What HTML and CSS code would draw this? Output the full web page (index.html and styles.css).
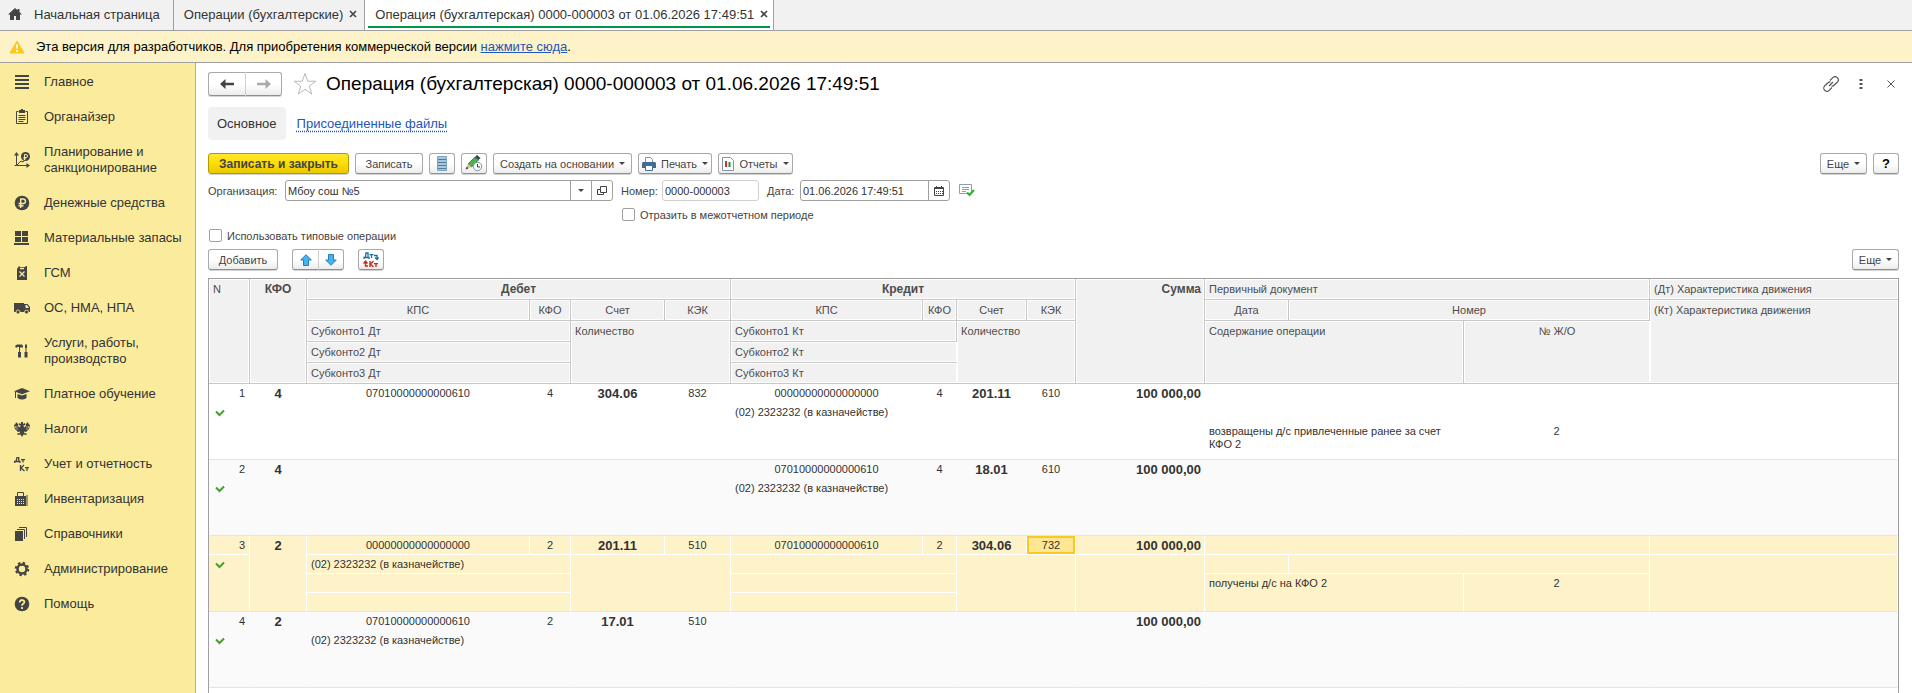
FILE: index.html
```html
<!DOCTYPE html>
<html lang="ru">
<head>
<meta charset="utf-8">
<meta name="viewport" content="width=device-width, initial-scale=1">
<title>Операция (бухгалтерская) 0000-000003 от 01.06.2026 17:49:51</title>
<link rel="stylesheet" href="styles.css">
</head>
<body>

  <nav class="tabs">
    <a class="tab home" href="#">
      <svg width="16" height="14" viewBox="0 0 16 14"><path fill="#444" d="M8 1 1 7.500h2V13h4V9h2v4h4V7.500h2L12.500 5V2h-2v1.200z"/></svg>
      Начальная страница
    </a>
    <div class="tab">
      <a href="#">Операции (бухгалтерские)</a>
      <button class="tab-close" aria-label="Закрыть"><svg width="8" height="8" viewBox="0 0 8 8"><path d="M1 1l6 6M7 1 1 7" stroke="#444" stroke-width="1.600"/></svg></button>
    </div>
    <div class="tab active">
      <a href="#">Операция (бухгалтерская) 0000-000003 от 01.06.2026 17:49:51</a>
      <button class="tab-close" aria-label="Закрыть"><svg width="8" height="8" viewBox="0 0 8 8"><path d="M1 1l6 6M7 1 1 7" stroke="#444" stroke-width="1.600"/></svg></button>
    </div>
  </nav>

  <div class="notice">
    <svg width="16" height="14" viewBox="0 0 16 14"><path fill="#fbc81c" stroke="#fbc81c" stroke-linejoin="round" d="M8 1 1 13h14z"/><path stroke="#fff" stroke-width="2" d="M8 4.500v4M8 10v2"/></svg>
    <span>Эта версия для разработчиков. Для приобретения коммерческой версии <a href="#">нажмите сюда</a>.</span>
  </div>

  <div class="page">
    <nav class="sidebar">
      <a href="#"><svg width="16" height="16" viewBox="0 0 16 16"><path fill="#444" d="M1 1h14v2H1zM1 5h14v2H1zM1 9h14v2H1zM1 13h14v2H1z"/></svg>Главное</a>
      <a href="#"><svg width="16" height="16" viewBox="0 0 16 16"><path fill="none" stroke="#444" d="M4.500 2.500h-2v12h11v-12h-2"/><path fill="#444" d="M5 1h2V0h2v1h2v3H5z"/><path stroke="#444" d="M4.500 6.500h7M4.500 8.500h7M4.500 10.500h7M4.500 12.500h5"/></svg>Органайзер</a>
      <a href="#"><svg width="16" height="16" viewBox="0 0 16 16"><path fill="none" stroke="#444" d="M2.500 2v11.500H14M3 13l4-4 2 1 2-2"/><path fill="#444" d="M2.500 0 5 3.500H0zM16 13.500 12.500 11v5zM.500 13h2v1h-2z"/><circle cx="11.500" cy="4.500" r="4.500" fill="#444"/><path fill="none" stroke="#faeb9d" d="M10.500 8V2.500h1.500a1 1 0 0 1 0 3H9.500M9.500 6.800H12"/></svg>Планирование и санкционирование</a>
      <a href="#"><svg width="16" height="16" viewBox="0 0 16 16"><circle cx="8" cy="8" r="7.300" fill="#444"/><path fill="none" stroke="#faeb9d" stroke-width="1.400" d="M6.700 13V4h2.500a2.200 2.200 0 0 1 0 4.500H4.500M4.500 10.700h5"/></svg>Денежные средства</a>
      <a href="#"><svg width="16" height="16" viewBox="0 0 16 16"><path fill="#444" d="M1 1h6v5H1zM8 1h6v5H8zM1 7h6v5H1zM8 7h6v5H8zM0 13h15v2H0z"/></svg>Материальные запасы</a>
      <a href="#"><svg width="16" height="16" viewBox="0 0 16 16"><path fill="#444" d="M3 4l2-3 1 1h5l1-1h1v14H3z"/><path stroke="#faeb9d" stroke-width="1.300" d="M5.500 6.500l5 5M10.500 6.500l-5 5M6 3.500h4"/></svg>ГСМ</a>
      <a href="#"><svg width="16" height="16" viewBox="0 0 16 16"><path fill="#444" d="M0 3h10v9H0zM9 4h4.500L16 7v5H9z"/><path fill="#faeb9d" d="M11.500 5H13l2 3h-3.500z"/><circle cx="4" cy="12" r="2" fill="#444" stroke="#faeb9d" stroke-width=".800"/><circle cx="12.500" cy="12" r="2" fill="#444" stroke="#faeb9d" stroke-width=".800"/></svg>ОС, НМА, НПА</a>
      <a href="#"><svg width="16" height="16" viewBox="0 0 16 16"><path fill="#444" d="M1 3l2-1.500h5L9 3v1.500H6V9h1v5.500H4V9h1V4H3.500L2 5zM11 2l1-1 1 1v3h-.500v4h1v5.500h-3V9h1V5H11z"/></svg>Услуги, работы, производство</a>
      <a href="#"><svg width="16" height="16" viewBox="0 0 16 16"><path fill="#444" d="M8 2l8 3.200-8 3-8-3z"/><path fill="#444" d="M3.500 8 8 9.500 12.500 8v4q-4.500 3-9 0zM1 6h1v6H1z"/></svg>Платное обучение</a>
      <a href="#"><svg width="16" height="16" viewBox="0 0 16 16"><path fill="#444" d="M7 1h2v2l2-1 .500 2-2 .500.500 2L12 5V3l2-2 .500 2L16 4l-1 4-3 3-2-.500.500 2 2-.500v2l-3-.500L8 16l-1.500-2.500-3 .500v-2l2 .500.500-2L4 11 1 8 0 4l1.500-1L2 1l2 2v2l2 1.500.500-2-2-.500L5 2l2 1z"/><path stroke="#faeb9d" stroke-width=".600" d="M3 5v4M13 5v4M1.500 5v2M14.500 5v2"/></svg>Налоги</a>
      <a href="#"><svg width="16" height="16" viewBox="0 0 16 16"><g fill="none" stroke="#444" stroke-width="1.300"><path d="M.600 7V5.500h5.300V7M2 5.500 3 1.600h1.700v4M7 3.600h4M9 3.600v3M6.500 9v6M10 9l-3 3 3.500 3M11 11.600h4M13 11.600V15"/></g></svg>Учет и отчетность</a>
      <a href="#"><svg width="16" height="16" viewBox="0 0 16 16"><path fill="none" stroke="#444" d="M3.500 6V1.500h6V6"/><path fill="#444" d="M1 5h11v10H1zM12.500 4h1v11h-1z"/><path stroke="#faeb9d" stroke-dasharray="1 1" d="M3 8.500h8M3 10.500h8M3 12.500h8"/></svg>Инвентаризация</a>
      <a href="#"><svg width="16" height="16" viewBox="0 0 16 16"><path fill="#444" d="M1 5h8v10H1z"/><path fill="none" stroke="#444" d="M3 3.500h7.500V13M5 1.500h7.500V11"/></svg>Справочники</a>
      <a href="#"><svg width="16" height="16" viewBox="0 0 16 16"><circle cx="8" cy="8" r="4.500" fill="none" stroke="#444" stroke-width="2.500"/><circle cx="8" cy="8" r="6.200" fill="none" stroke="#444" stroke-width="2" stroke-dasharray="2.430 2.430"/></svg>Администрирование</a>
      <a href="#"><svg width="16" height="16" viewBox="0 0 16 16"><circle cx="8" cy="8" r="7.300" fill="#444"/><path fill="none" stroke="#faeb9d" stroke-width="1.800" d="M5.700 6.500c0-3.500 5-3 4.600-.300C10 7.700 8 7.700 8 9.800M8 11v2"/></svg>Помощь</a>
    </nav>

    <main class="content">
      <header class="title-row">
        <div class="btn-group nav-btns">
          <button class="btn" aria-label="Назад"><svg width="14" height="10" viewBox="0 0 14 10"><path fill="#444" d="M0 5l5.500-5v3.800H14v2.400H5.500V10z"/></svg></button>
          <button class="btn" aria-label="Вперед"><svg width="14" height="10" viewBox="0 0 14 10"><path fill="#aaa" d="M14 5 8.500 0v3.800H0v2.400h8.500V10z"/></svg></button>
        </div>
        <svg class="star" width="24" height="24" viewBox="0 0 24 24"><path fill="#fff" stroke="#b4bac0" d="M12 1.500l2.700 7.700h8.100l-6.500 4.900 2.400 7.900L12 17.200 5.300 22l2.400-7.900L1.200 9.200h8.100z"/></svg>
        <h1>Операция (бухгалтерская) 0000-000003 от 01.06.2026 17:49:51</h1>
        <div class="window-icons">
          <button aria-label="Ссылка"><svg width="16" height="16" viewBox="0 0 16 16"><g fill="none" stroke="#555" stroke-width="1.200"><path d="M7 4.500 9.800 1.700a3 3 0 0 1 4.500 4.500L11 9.300a2.800 2.800 0 0 1-2.500.700M9 11.500 6.200 14.300a3 3 0 0 1-4.500-4.500L5 6.700A2.800 2.800 0 0 1 7.500 6M6 10l4-4"/></g></svg></button>
          <button aria-label="Меню"><svg width="4" height="12" viewBox="0 0 4 12"><path fill="#555" d="M.500 1h3v2h-3zM.500 5h3v2h-3zM.500 9h3v2h-3z"/></svg></button>
          <button aria-label="Закрыть"><svg width="8" height="8" viewBox="0 0 8 8"><path d="M.500.500l7 7M7.500.500l-7 7" stroke="#555"/></svg></button>
        </div>
      </header>

      <nav class="sections">
        <a class="current" href="#">Основное</a>
        <a href="#">Присоединенные файлы</a>
      </nav>

      <div class="toolbar">
        <button class="btn primary">Записать и закрыть</button>
        <button class="btn save">Записать</button>
        <button class="btn icon" aria-label="Журнал"><svg width="12" height="15" viewBox="0 0 12 15"><path fill="#a9c8e0" stroke="#7ba3c0" d="M1.500.500h9v14h-9z"/><path stroke="#4f7d9f" d="M2 3.500h8M2 6.500h8M2 9.500h8M2 12.500h8"/></svg></button>
        <button class="btn icon" aria-label="Редактировать"><svg width="18" height="17" viewBox="0 0 18 17"><path fill="#4caf50" stroke="#2c7a37" stroke-width=".800" d="M3 9 10 2l3.500 3-7 7z"/><path fill="#37474f" d="M10 2l2-2 3.500 3-2 2z"/><path fill="#e7bd86" d="M3 9l3.500 3L1 14z"/><path fill="#444" d="M1.800 11.500.500 14.500l3-1z"/><circle cx="12.500" cy="11.500" r="4.200" fill="#fff" stroke="#7895a8"/><path fill="none" stroke="#37474f" d="M12.500 9v3H15"/></svg></button>
        <button class="btn create">Создать на основании <i class="caret"></i></button>
        <button class="btn print"><svg width="14" height="14" viewBox="0 0 14 14"><path fill="#fff" stroke="#7a94a8" d="M3.500 5.500v-5h5l2 2v3"/><path fill="#3f6c94" d="M1 5h12l1 1v5H0V6z"/><path fill="#fff" stroke="#3f6c94" d="M3.500 8.500h7v5h-7z"/></svg>Печать <i class="caret"></i></button>
        <button class="btn reports"><svg width="12" height="14" viewBox="0 0 12 14"><path fill="#fff" stroke="#8096a8" d="M.500.500h8l3 3v10H.500z"/><path fill="#e22" d="M3 4h2v6H3z"/><path fill="#0a9b3a" d="M6.500 5h2v5h-2z"/></svg>Отчеты <i class="caret"></i></button>
        <span class="spacer"></span>
        <button class="btn more">Еще <i class="caret"></i></button>
        <button class="btn icon help">?</button>
      </div>

      <div class="form">
        <label class="org-label" for="org">Организация:</label>
        <div class="field org">
          <select id="org"><option>Мбоу сош №5</option></select>
          <span class="drop"><i class="caret"></i></span>
          <button aria-label="Открыть"><svg width="10" height="10" viewBox="0 0 10 10"><path fill="none" stroke="#444" d="M3.500.500h6v6h-6zM3 3.500H.500v5h6V7"/></svg></button>
        </div>
        <div class="number-date">
          <label for="num">Номер:</label>
          <input class="field number" id="num" type="text" value="0000-000003">
          <label class="date-label" for="date">Дата:</label>
          <div class="field date">
            <input id="date" type="text" value="01.06.2026 17:49:51">
            <button aria-label="Календарь"><svg width="10" height="10" viewBox="0 0 10 10"><path fill="none" stroke="#444" d="M.500 1.500h9v8h-9z"/><path fill="#444" d="M1 1h8v2H1zM2 0h1v1H2zM7 0h1v1H7z"/><path stroke="#444" stroke-dasharray="1 1" d="M2 5.500h7M2 7.500h7"/></svg></button>
          </div>
          <svg class="posted" width="16" height="13" viewBox="0 0 16 13"><path fill="#fff" stroke="#8ba0b2" d="M.500.500h12v9H.500z"/><path stroke="#8ba0b2" d="M3 3.500h7M3 5.500h7M3 7.500h4"/><path fill="none" stroke="#2fb43a" stroke-width="2.200" d="M8 8.500l2.500 2.500L15 6"/></svg>
        </div>
        <label class="check between"><input type="checkbox">Отразить в межотчетном периоде</label>
      </div>

      <label class="check typical"><input type="checkbox">Использовать типовые операции</label>

      <div class="toolbar table-bar">
        <button class="btn add">Добавить</button>
        <div class="btn-group arrows">
          <button class="btn" aria-label="Вверх"><svg width="12" height="12" viewBox="0 0 12 12"><path fill="#47b2ee" stroke="#2681b5" d="M6 .700 11.300 6H8.500v5.500h-5V6H.700z"/></svg></button>
          <button class="btn" aria-label="Вниз"><svg width="12" height="12" viewBox="0 0 12 12"><path fill="#47b2ee" stroke="#2681b5" d="M6 11.300 11.300 6H8.500V.500h-5V6H.700z"/></svg></button>
        </div>
        <button class="btn icon" aria-label="Поменять Дт и Кт"><svg width="16" height="16" viewBox="0 0 16 16"><g fill="none" stroke="#1b6f9c" stroke-width="1.300"><path d="M1 7V5.500h5V7M2.300 5.500 3 1h2v4.500M6.500 2.600h4M8.500 2.600V6M11 3.500h3V7M12 5.500l2 2 1.500-2"/></g><g fill="none" stroke="#c62b1c" stroke-width="1.400"><path d="M2.500 9.500V14H5M.500 11.500l2-2.500 2 2.500M7 9v6M10.500 9l-3 3 3 3M11 11.600h4M13 11.600V15"/></g></svg></button>
        <span class="spacer"></span>
        <button class="btn more">Еще <i class="caret"></i></button>
      </div>

      <div class="grid-wrap">
        <table class="grid">
          <colgroup>
            <col class="c-n"><col class="c-kfo">
            <col class="d-kps"><col class="d-kfo"><col class="d-acc"><col class="d-kek">
            <col class="k-kps"><col class="k-kfo"><col class="k-acc"><col class="k-kek">
            <col class="c-sum"><col class="c-date"><col class="c-num"><col class="c-jo"><col>
          </colgroup>
          <thead>
            <tr>
              <th rowspan="5" class="left">N</th>
              <th rowspan="5" class="bold">КФО</th>
              <th colspan="4" class="bold">Дебет</th>
              <th colspan="4" class="bold">Кредит</th>
              <th rowspan="5" class="bold right">Сумма</th>
              <th colspan="3" class="left">Первичный документ</th>
              <th class="left">(Дт) Характеристика движения</th>
            </tr>
            <tr>
              <th>КПС</th><th>КФО</th><th>Счет</th><th>КЭК</th>
              <th>КПС</th><th>КФО</th><th>Счет</th><th>КЭК</th>
              <th>Дата</th><th colspan="2">Номер</th>
              <th rowspan="4" class="left">(Кт) Характеристика движения</th>
            </tr>
            <tr>
              <th colspan="2" class="left">Субконто1 Дт</th>
              <th colspan="2" rowspan="3" class="left">Количество</th>
              <th colspan="2" class="left">Субконто1 Кт</th>
              <th colspan="2" rowspan="3" class="left">Количество</th>
              <th colspan="2" rowspan="3" class="left">Содержание операции</th>
              <th rowspan="3">№ Ж/О</th>
            </tr>
            <tr>
              <th colspan="2" class="left">Субконто2 Дт</th>
              <th colspan="2" class="left">Субконто2 Кт</th>
            </tr>
            <tr>
              <th colspan="2" class="left">Субконто3 Дт</th>
              <th colspan="2" class="left">Субконто3 Кт</th>
            </tr>
          </thead>

          <tbody>
            <tr>
              <td class="right n">1</td><td rowspan="4" class="bold">4</td>
              <td>07010000000000610</td><td>4</td><td class="bold">304.06</td><td>832</td>
              <td>00000000000000000</td><td>4</td><td class="bold">201.11</td><td>610</td>
              <td class="bold right">100 000,00</td><td colspan="3"></td><td></td>
            </tr>
            <tr>
              <td rowspan="3" class="left mark"><svg width="10" height="8" viewBox="0 0 10 8"><path fill="none" stroke="#46a02a" stroke-width="2" d="M1 2.500 4.500 6 9 1.500"/></svg></td>
              <td colspan="2"></td><td colspan="2" rowspan="3"></td>
              <td colspan="2" class="left">(02) 2323232 (в казначействе)</td><td colspan="2" rowspan="3"></td>
              <td rowspan="3"></td><td></td><td colspan="2"></td><td rowspan="3"></td>
            </tr>
            <tr>
              <td colspan="2"></td><td colspan="2"></td>
              <td colspan="2" rowspan="2" class="left note">возвращены д/с привлеченные ранее за счет КФО 2</td><td rowspan="2">2</td>
            </tr>
            <tr><td colspan="2"></td><td colspan="2"></td></tr>
          </tbody>

          <tbody class="even">
            <tr>
              <td class="right n">2</td><td rowspan="4" class="bold">4</td>
              <td></td><td></td><td></td><td></td>
              <td>07010000000000610</td><td>4</td><td class="bold">18.01</td><td>610</td>
              <td class="bold right">100 000,00</td><td colspan="3"></td><td></td>
            </tr>
            <tr>
              <td rowspan="3" class="left mark"><svg width="10" height="8" viewBox="0 0 10 8"><path fill="none" stroke="#46a02a" stroke-width="2" d="M1 2.500 4.500 6 9 1.500"/></svg></td>
              <td colspan="2"></td><td colspan="2" rowspan="3"></td>
              <td colspan="2" class="left">(02) 2323232 (в казначействе)</td><td colspan="2" rowspan="3"></td>
              <td rowspan="3"></td><td></td><td colspan="2"></td><td rowspan="3"></td>
            </tr>
            <tr>
              <td colspan="2"></td><td colspan="2"></td>
              <td colspan="2" rowspan="2"></td><td rowspan="2"></td>
            </tr>
            <tr><td colspan="2"></td><td colspan="2"></td></tr>
          </tbody>

          <tbody class="selected">
            <tr>
              <td class="right n">3</td><td rowspan="4" class="bold">2</td>
              <td>00000000000000000</td><td>2</td><td class="bold">201.11</td><td>510</td>
              <td>07010000000000610</td><td>2</td><td class="bold">304.06</td><td class="cursor">732</td>
              <td class="bold right">100 000,00</td><td colspan="3"></td><td></td>
            </tr>
            <tr>
              <td rowspan="3" class="left mark"><svg width="10" height="8" viewBox="0 0 10 8"><path fill="none" stroke="#46a02a" stroke-width="2" d="M1 2.500 4.500 6 9 1.500"/></svg></td>
              <td colspan="2" class="left">(02) 2323232 (в казначействе)</td><td colspan="2" rowspan="3"></td>
              <td colspan="2"></td><td colspan="2" rowspan="3"></td>
              <td rowspan="3"></td><td></td><td colspan="2"></td><td rowspan="3"></td>
            </tr>
            <tr>
              <td colspan="2"></td><td colspan="2"></td>
              <td colspan="2" rowspan="2" class="left note">получены д/с на КФО 2</td><td rowspan="2">2</td>
            </tr>
            <tr><td colspan="2"></td><td colspan="2"></td></tr>
          </tbody>

          <tbody class="even">
            <tr>
              <td class="right n">4</td><td rowspan="4" class="bold">2</td>
              <td>07010000000000610</td><td>2</td><td class="bold">17.01</td><td>510</td>
              <td></td><td></td><td></td><td></td>
              <td class="bold right">100 000,00</td><td colspan="3"></td><td></td>
            </tr>
            <tr>
              <td rowspan="3" class="left mark"><svg width="10" height="8" viewBox="0 0 10 8"><path fill="none" stroke="#46a02a" stroke-width="2" d="M1 2.500 4.500 6 9 1.500"/></svg></td>
              <td colspan="2" class="left">(02) 2323232 (в казначействе)</td><td colspan="2" rowspan="3"></td>
              <td colspan="2"></td><td colspan="2" rowspan="3"></td>
              <td rowspan="3"></td><td></td><td colspan="2"></td><td rowspan="3"></td>
            </tr>
            <tr>
              <td colspan="2"></td><td colspan="2"></td>
              <td colspan="2" rowspan="2"></td><td rowspan="2"></td>
            </tr>
            <tr><td colspan="2"></td><td colspan="2"></td></tr>
          </tbody>
        </table>
      </div>
    </main>
  </div>

</body>
</html>
```
FILE: styles.css
```css
* {
  box-sizing: border-box;
}

body {
  margin: 0;
  height: 100vh;
  overflow: hidden;
  display: flex;
  flex-direction: column;
  font-family: "Liberation Sans", Arial, sans-serif;
  font-size: 11px;
  color: #444;
  background: #fff;
}

button, input, select {
  font: inherit;
  color: inherit;
}

svg {
  display: block;
  flex: none;
}

/* Open windows */
.tabs {
  display: flex;
  flex: none;
  height: 31px;
  background: #f1f1f1;
  border-bottom: 1px solid #a0a0a0;
  font-size: 13px;
}

.tab {
  display: flex;
  align-items: center;
  gap: 6px;
  padding: 0 7px 2px 10px;
  border-right: 1px solid #a0a0a0;
  white-space: nowrap;
}

.tab.home {
  gap: 11px;
  padding: 0 13px 2px 7px;
}

.tab, .tab a {
  color: #333;
  text-decoration: none;
}

.tab.active {
  position: relative;
  padding-right: 5px;
  background: #fff;
}

.tab.active::after {
  content: "";
  position: absolute;
  left: 3px;
  right: 3px;
  bottom: 2px;
  height: 2px;
  background: #00964a;
}

.tab-close {
  padding: 0;
  border: 0;
  background: none;
}

.notice {
  display: flex;
  flex: none;
  align-items: center;
  gap: 11px;
  height: 32px;
  padding-left: 9px;
  background: #fdf2c8;
  border-bottom: 1px solid #a0a0a0;
  color: #000;
  font-size: 13px;
}

a {
  color: #2455b8;
}

.page {
  display: flex;
  flex: 1;
  min-height: 0;
}

/* Main menu */
.sidebar {
  flex: none;
  width: 196px;
  padding-top: 1px;
  background: #faeb9d;
  border-right: 1px solid #b5b08c;
}

.sidebar a {
  display: flex;
  align-items: center;
  gap: 14px;
  padding: 10px 8px 9px 14px;
  font-size: 13px;
  line-height: 16px;
  color: #333;
  text-decoration: none;
}

.content {
  flex: 1;
  min-width: 0;
  display: flex;
  flex-direction: column;
  padding: 8px 13px 0 12px;
}

.title-row {
  display: flex;
  flex: none;
  align-items: center;
  height: 25px;
}

.star {
  margin: 0 9px 0 11px;
}

h1 {
  flex: 1;
  margin: 0;
  font-size: 19px;
  font-weight: normal;
  color: #000;
}

.window-icons {
  display: flex;
  align-items: center;
  gap: 14px;
}

.window-icons button {
  display: flex;
  align-items: center;
  justify-content: center;
  width: 16px;
  padding: 0;
  border: 0;
  background: none;
}

.sections {
  display: flex;
  flex: none;
  align-items: center;
  height: 34px;
  margin: 10px 0 13px;
  font-size: 13px;
}

.sections a {
  text-decoration: underline dotted;
  text-underline-offset: 3px;
}

.sections .current {
  padding: 9px;
  margin-right: 11px;
  border-radius: 4px;
  background: #f1f1f1;
  color: #333;
  text-decoration: none;
}

/* Buttons */
.toolbar {
  display: flex;
  flex: none;
  gap: 6px;
}

.spacer {
  flex: 1;
}

.btn {
  display: flex;
  align-items: center;
  justify-content: center;
  gap: 5px;
  height: 21px;
  padding: 0;
  border: 1px solid #a9a9a9;
  border-bottom-color: #8f8f8f;
  border-radius: 3px;
  background: linear-gradient(#fff 50%, #ececec);
  box-shadow: 0 1px 0 #d4d4d4;
  color: #444;
  white-space: nowrap;
}

.btn-group {
  display: flex;
}

.btn-group .btn:first-child {
  border-right: 0;
  border-radius: 3px 0 0 3px;
}

.btn-group .btn:last-child {
  border-radius: 0 3px 3px 0;
  border-left-color: #d0d0d0;
}

.nav-btns .btn {
  width: 37px;
  height: 24px;
}

.btn.primary {
  width: 141px;
  border-color: #b09a00;
  background: linear-gradient(#ffe733, #ffdd00 50%, #e8c800);
  font-size: 12px;
  font-weight: bold;
}

.save { width: 68px; }
.create { width: 139px; }
.print { width: 74px; }
.reports { width: 75px; }
.more { width: 47px; }
.add { width: 70px; }
.icon { width: 26px; }

.btn.help {
  font-size: 13px;
  font-weight: bold;
  color: #000;
}

.caret {
  display: inline-block;
  border: 3px solid transparent;
  border-top-color: #444;
  border-bottom: 0;
}

/* Document fields */
.form {
  display: grid;
  grid-template-columns: 77px 328px auto;
  justify-content: start;
  align-items: center;
  margin-top: 6px;
  row-gap: 6px;
}

.field {
  display: flex;
  height: 21px;
  border: 1px solid #a0a0a0;
  border-radius: 3px;
  background: #fff;
  color: #333;
}

.field input, .field select {
  flex: 1;
  min-width: 0;
  padding: 0 2px;
  border: 0;
  background: none;
  appearance: none;
}

.field button, .drop {
  display: flex;
  align-items: center;
  justify-content: center;
  width: 21px;
  padding: 0;
  border: 0;
  border-left: 1px solid #a0a0a0;
  background: none;
}

.number-date {
  display: flex;
  align-items: center;
  padding-left: 8px;
}

.number-date label {
  width: 41px;
}

.number-date .date-label {
  width: 33px;
  margin-left: 8px;
}

.field.number {
  width: 97px;
  padding: 0 2px;
  border-color: #d0d0d0;
}

.field.date {
  width: 150px;
}

.posted {
  margin-left: 9px;
}

.check {
  display: flex;
  align-items: center;
  gap: 5px;
  height: 15px;
}

.check input {
  width: 13px;
  height: 13px;
  margin: 0;
  border: 1px solid #a0a0a0;
  border-radius: 2px;
  background: #fff;
  appearance: none;
}

.between {
  grid-column: 3;
  padding-left: 9px;
}

.typical {
  flex: none;
  margin: 6px 0 6px 1px;
}

.table-bar .arrows {
  margin: 0 8px;
}

.arrows .btn {
  width: 26px;
}

/* Entries table */
.grid-wrap {
  flex: 1;
  min-height: 0;
  margin-top: 8px;
  overflow: hidden;
  border: 1px solid #a0a0a0;
  border-bottom: 0;
}

.grid {
  width: 100%;
  table-layout: fixed;
  border-collapse: separate;
  border-spacing: 0;
}

.c-n { width: 41px; }
.c-kfo { width: 57px; }
.d-kps { width: 223px; }
.d-kfo { width: 41px; }
.d-acc { width: 94px; }
.d-kek { width: 66px; }
.k-kps { width: 192px; }
.k-kfo { width: 34px; }
.k-acc { width: 70px; }
.k-kek { width: 49px; }
.c-sum { width: 129px; }
.c-date { width: 84px; }
.c-num { width: 175px; }
.c-jo { width: 186px; }

.grid th, .grid td {
  padding: 3px 3px 0;
  overflow: hidden;
  vertical-align: top;
  text-align: center;
  font-weight: normal;
  line-height: 13px;
  white-space: nowrap;
}

.grid th {
  height: 21px;
  padding-top: 4px;
  border-right: 1px solid #c8c8c8;
  border-bottom: 1px solid #c8c8c8;
  background: #f1f1f1;
  box-shadow: inset 0 0 0 1px #fff;
  color: #4d4d4d;
}

.grid td {
  height: 19px;
  border-right: 1px solid transparent;
  color: #333;
}

.grid th:last-child {
  border-right: 0;
}

.grid .left {
  padding-left: 4px;
  text-align: left;
}

.grid .right {
  text-align: right;
}

.grid .bold {
  font-size: 12px;
  font-weight: bold;
}

.grid td.bold {
  font-size: 13px;
}

.grid .n {
  padding-right: 4px;
}

.grid .mark {
  padding: 6px 6px 0;
}

.grid .note {
  white-space: normal;
}

.grid tbody tr:last-child td, .grid tbody td[rowspan="4"],
.grid tbody td[rowspan="3"], .grid tbody td[rowspan="2"] {
  border-bottom: 1px solid #e4e4e4;
}

.even {
  background: #fafafa;
}

.selected td {
  background: #fdf2c8;
  border-right-color: #fff;
  border-bottom: 1px solid #fff;
}

.grid .cursor {
  background: #fee692;
  box-shadow: inset 0 0 0 2px #fbc81c;
}
```
